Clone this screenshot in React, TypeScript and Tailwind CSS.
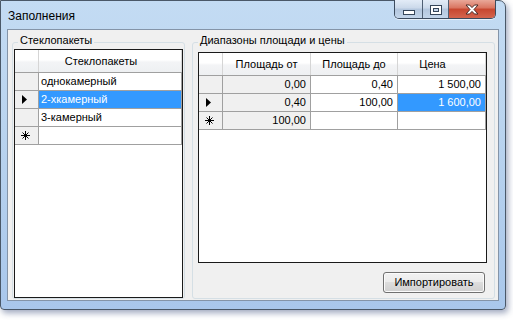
import * as React from 'react';

type Marker = 'none' | 'current' | 'new';

interface Cell {
  text: string;
  readOnly?: boolean;
  selected?: boolean;
}

interface Row {
  marker: Marker;
  cells: Cell[];
}

const glassRows: Row[] = [
  { marker: 'none', cells: [{ text: 'однокамерный' }] },
  { marker: 'current', cells: [{ text: '2-хкамерный', selected: true }] },
  { marker: 'none', cells: [{ text: '3-камерный' }] },
  { marker: 'new', cells: [{ text: '' }] },
];

const rangeRows: Row[] = [
  {
    marker: 'none',
    cells: [{ text: '0,00', readOnly: true }, { text: '0,40' }, { text: '1 500,00' }],
  },
  {
    marker: 'current',
    cells: [{ text: '0,40', readOnly: true }, { text: '100,00' }, { text: '1 600,00', selected: true }],
  },
  {
    marker: 'new',
    cells: [{ text: '100,00', readOnly: true }, { text: '' }, { text: '' }],
  },
];

function RowMarker({ marker }: { marker: Marker }) {
  if (marker === 'current') {
    return (
      <svg width="5" height="9" viewBox="0 0 5 9" className="ml-[7px]">
        <path d="M0 0L5 4.5L0 9Z" fill="#000" />
      </svg>
    );
  }
  if (marker === 'new') {
    return (
      <svg width="9" height="9" viewBox="0 0 9 9" fill="none" stroke="#000" strokeWidth="1" className="ml-[6px]">
        <path d="M4.5 0V9M0 4.5H9M1.5 1.5L7.5 7.5M7.5 1.5L1.5 7.5" />
      </svg>
    );
  }
  return null;
}

function DataGrid({
  columns,
  rows,
  align,
  className,
}: {
  columns: { title: string; width: string; headerPad?: string }[];
  rows: Row[];
  align: 'left' | 'right';
  className: string;
}) {
  return (
    <div className={`bg-white border border-[#1a1a1a] ${className}`}>
      {/* header */}
      <div className="flex h-[23px] border-b border-[#a0a0a0] bg-[linear-gradient(#ffffff,#ffffff_45%,#f3f4f6_55%,#eef0f2)]">
        <div className="w-[24px] shrink-0 border-r border-[#d5d5d5]" />
        {columns.map((col) => (
          <div
            key={col.title}
            className={`${col.width} shrink-0 border-r border-[#d5d5d5] flex items-center justify-center ${col.headerPad ?? ''}`}
          >
            {col.title}
          </div>
        ))}
      </div>
      {rows.map((row, i) => (
        <div key={i} className="flex h-[18px]">
          <div className="w-[24px] shrink-0 bg-[#f0f0f0] border-r border-b border-[#a0a0a0] flex items-center">
            <RowMarker marker={row.marker} />
          </div>
          {row.cells.map((cell, j) => (
            <div
              key={j}
              className={`${columns[j].width} shrink-0 border-r border-b border-[#a0a0a0] flex items-center whitespace-nowrap ${
                align === 'right' ? 'justify-end pr-[4px]' : 'pl-[2px]'
              } ${cell.selected ? 'bg-[#3399ff] text-white' : cell.readOnly ? 'bg-[#f0f0f0]' : 'bg-white'}`}
            >
              {cell.text}
            </div>
          ))}
        </div>
      ))}
    </div>
  );
}

function CaptionButtons() {
  return (
    <div className="flex h-[19px] mr-[9px] -mt-[1px] border border-t-0 border-[#3c4b5e] rounded-b-[5px] overflow-hidden shadow-[0_1px_0_rgba(255,255,255,0.6)]">
      <div className="w-[28px] flex items-center justify-center border-r border-[#4f5f73] bg-[linear-gradient(#e3ecf7,#cbd9ea_45%,#b3c6dd_50%,#c3d5ea)]">
        <svg width="12" height="5" viewBox="0 0 12 5" className="mt-[6px]">
          <rect x="0.5" y="0.5" width="11" height="4" fill="#fff" stroke="#36465a" />
        </svg>
      </div>
      <div className="w-[26px] flex items-center justify-center border-r border-[#4f5f73] bg-[linear-gradient(#e3ecf7,#cbd9ea_45%,#b3c6dd_50%,#c3d5ea)]">
        <svg width="12" height="10" viewBox="0 0 12 10" className="mt-[1px]">
          <rect x="0.5" y="0.5" width="11" height="9" fill="#fff" stroke="#36465a" />
          <rect x="3.5" y="3.5" width="5" height="3" fill="#c6d6ea" stroke="#36465a" />
        </svg>
      </div>
      <div className="w-[46px] flex items-center justify-center bg-[linear-gradient(#e9a899,#d9735f_45%,#c7462f_50%,#d4644d)]">
        <svg width="14" height="11" viewBox="0 0 14 11" className="mt-[1px]">
          <path
            d="M1 1H4.5L7 3.6L9.5 1H13L9 5.5L13 10H9.5L7 7.4L4.5 10H1L5 5.5Z"
            fill="#fff"
            stroke="#4a2a26"
            strokeWidth="1"
            strokeLinejoin="round"
          />
        </svg>
      </div>
    </div>
  );
}

export default function App() {
  return (
    <div className="w-[513px] h-[322px] bg-white overflow-hidden font-['Liberation_Sans',Arial,sans-serif] text-[11px] text-black">
      <div className="w-[506px] h-[310px] flex flex-col border border-[#4a5868] rounded-tr-[7px] rounded-b-[4px] bg-[linear-gradient(#c3dbf3,#bad4ef_40%,#a9c7eb)] shadow-[2px_3px_6px_rgba(40,60,110,0.45)]">
        {/* title bar */}
        <div className="h-[28px] flex items-start">
          <span className="pl-[7px] pt-[8px] text-[12px] leading-[14px] text-black">Заполнения</span>
          <div className="ml-auto">
            <CaptionButtons />
          </div>
        </div>

        {/* client */}
        <div className="mx-[6px] h-[272px] border border-[#8494a8] bg-[#f0f0f0] flex pl-[4px] pt-[3px] gap-[7px]">
          <fieldset className="w-[173px] h-[266px] border border-[#d5dfe5] rounded-[3px] pl-[1px]">
            <legend className="ml-[4px] px-[2px] leading-[14px] pb-[4px] text-[11px] text-black">
              Стеклопакеты
            </legend>
            <DataGrid
              className="w-[169px] h-[249px] -mt-[2px]"
              columns={[{ title: 'Стеклопакеты', width: 'w-[143px]', headerPad: 'pr-[18px]' }]}
              rows={glassRows}
              align="left"
            />
          </fieldset>

          <fieldset className="w-[303px] h-[266px] border border-[#d5dfe5] rounded-[3px] pl-[5px]">
            <legend className="px-[2px] leading-[14px] pb-[4px] text-[11px] text-black">
              Диапазоны площади и цены
            </legend>
            <DataGrid
              className="w-[289px] h-[211px] mt-[1px]"
              columns={[
                { title: 'Площадь от', width: 'w-[88px]' },
                { title: 'Площадь до', width: 'w-[87px]' },
                { title: 'Цена', width: 'w-[88px]', headerPad: 'pr-[18px]' },
              ]}
              rows={rangeRows}
              align="right"
            />
            <div className="w-[289px] flex justify-end pr-[2px] mt-[9px]">
              <button
                type="button"
                className="w-[102px] h-[21px] rounded-[3px] border border-[#707070] bg-[linear-gradient(#f2f2f2,#ebebeb_50%,#dddddd_50%,#cfcfcf)] shadow-[inset_0_0_0_1px_#fbfbfb] text-[11px] text-black"
              >
                Импортировать
              </button>
            </div>
          </fieldset>
        </div>
      </div>
    </div>
  );
}
